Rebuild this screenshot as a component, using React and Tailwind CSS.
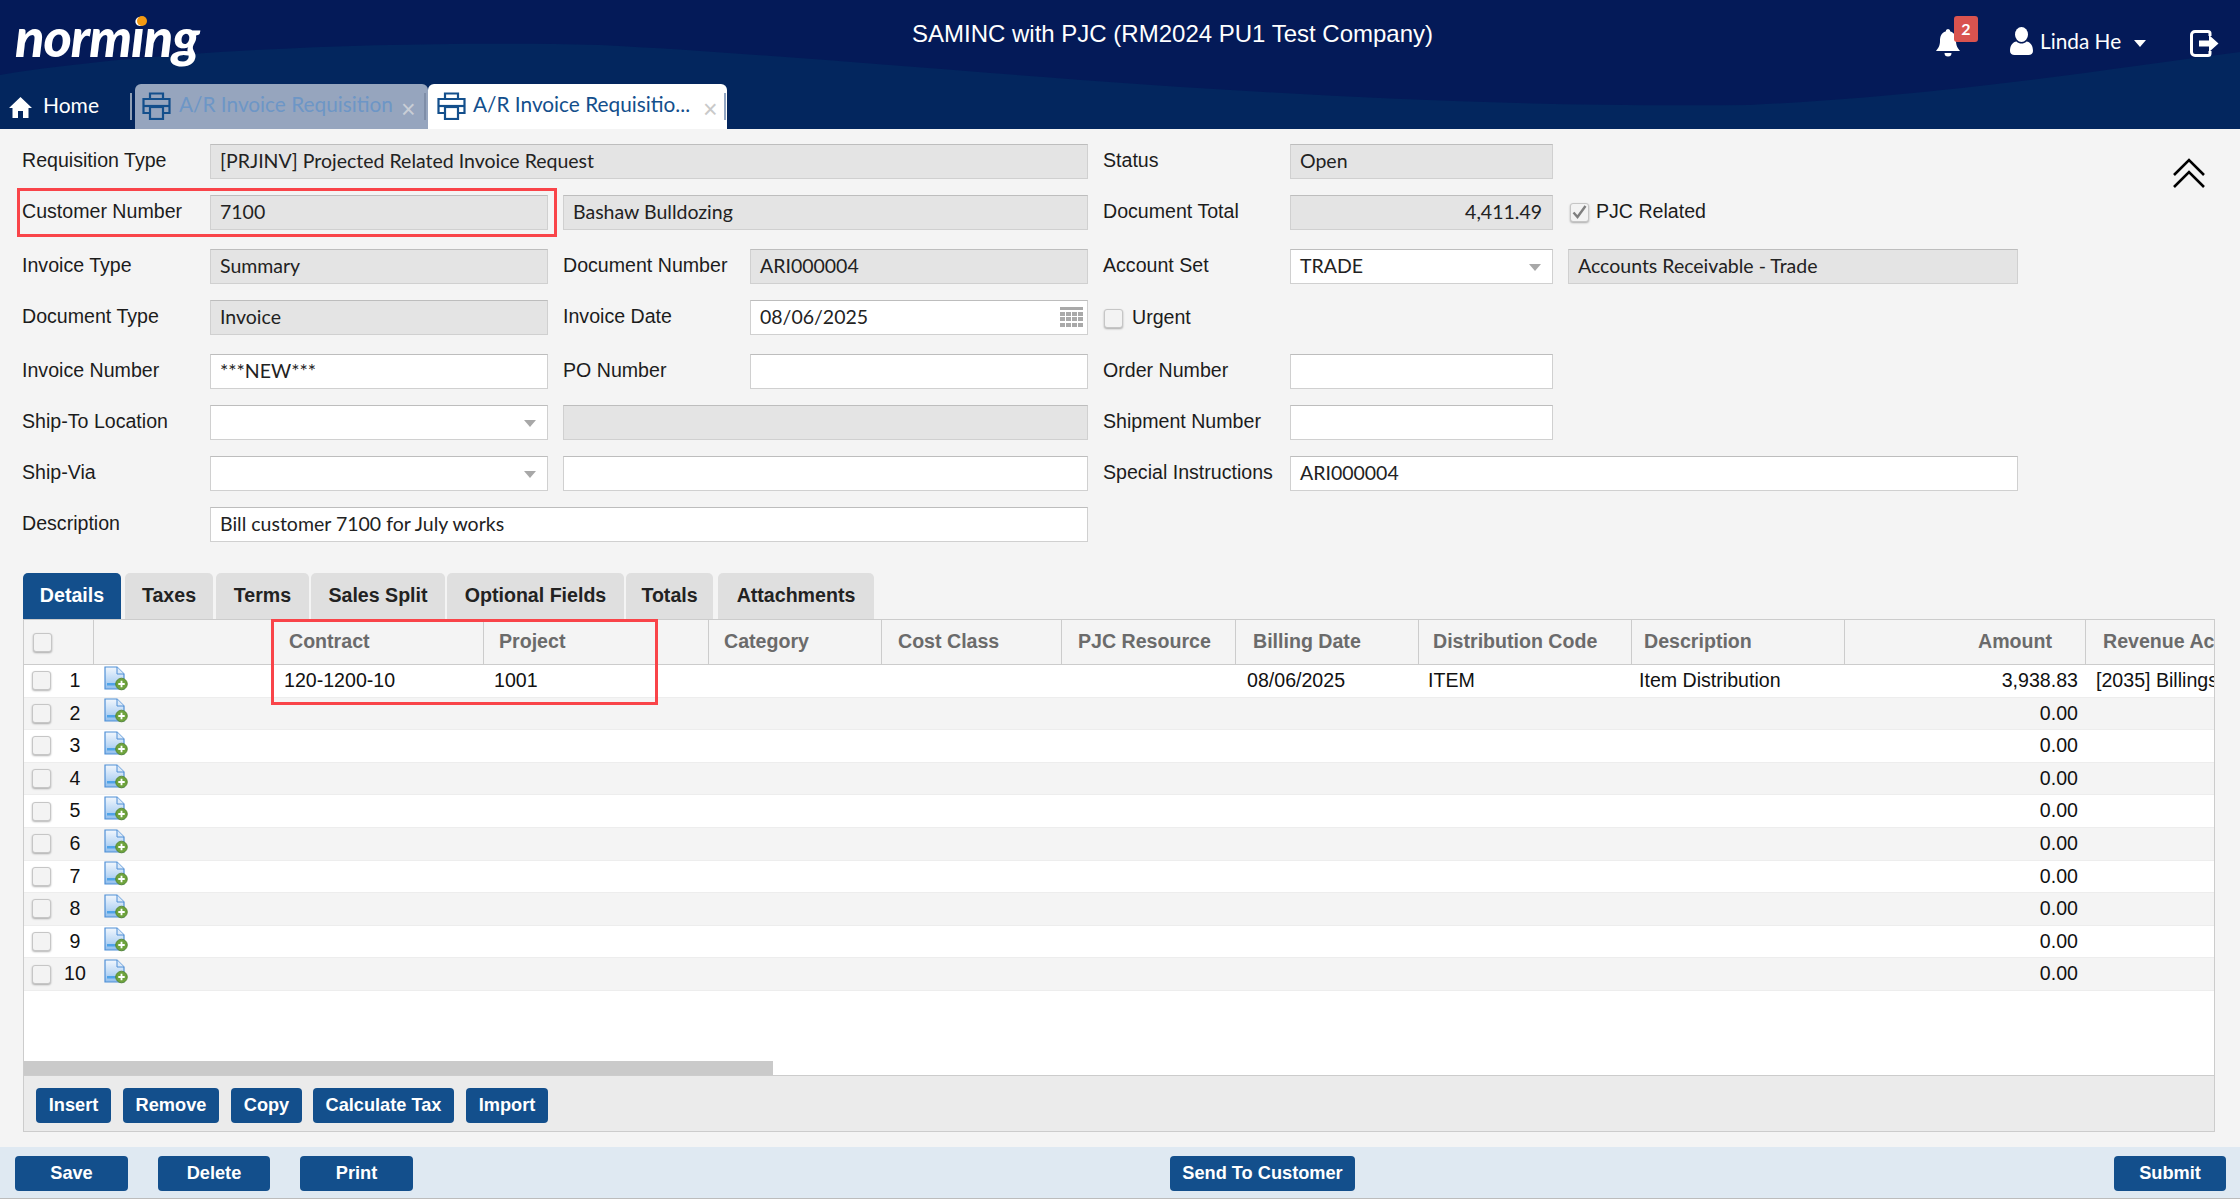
import React from "react";

const lato = "[font-family:Lato,sans-serif]";
const arial = "[font-family:Liberation_Sans,sans-serif]";

function Caret({ className = "" }) {
  return (
    <svg width="12" height="7" viewBox="0 0 12 7" className={className}>
      <path d="M0 0h12L6 7z" fill="currentColor" />
    </svg>
  );
}

function Label({ children, className = "" }) {
  return <div className={`flex items-center pb-[2px] text-[19.6px] text-[#1c1c1c] ${arial} ${className}`}>{children}</div>;
}

function Field({ value, ro, right, select, calendar, className = "" }) {
  return (
    <div
      className={`relative flex h-[35px] items-center border border-[#d0d0d0] border-t-[#bdbdbd] px-[9px] pb-[1px] text-[19.5px] text-[#222] ${lato} ${
        ro ? "bg-[#e4e4e4]" : "bg-white"
      } ${right ? "justify-end pr-[10px]" : ""} ${className}`}
    >
      {value}
      {select && <Caret className="absolute right-[11px] top-[14px] text-[#a8a8a8]" />}
      {calendar && (
        <svg width="23" height="21" viewBox="0 0 23 21" className="absolute right-[4px] top-[6px] text-[#a9a9a9]">
          <rect x="0" y="0" width="23" height="3" fill="currentColor" />
          {[5, 10, 16].map((y) =>
            [0, 6, 12, 18].map((x) => <rect key={`${x}-${y}`} x={x} y={y} width="5" height="4" fill="currentColor" />)
          )}
        </svg>
      )}
    </div>
  );
}

function Check({ checked, className = "" }) {
  return (
    <span
      className={`relative block h-[19px] w-[19px] rounded-[3px] border border-[#c6c6c6] bg-[#f3f3f3] shadow-[0_1px_2px_rgba(0,0,0,0.3)] ${className}`}
    >
      {checked && (
        <svg width="19" height="19" viewBox="0 0 19 19" className="absolute left-[-1px] top-[-1px]">
          <path d="M3.500 9.500l4 4.500 8-11" fill="none" stroke="#7f7f7f" strokeWidth="2.400" />
        </svg>
      )}
    </span>
  );
}

function Printer() {
  return (
    <svg width="29" height="28" viewBox="0 0 29 28" fill="none" stroke="#134f8c" strokeWidth="2.200">
      <path d="M8 7V1.500h13V7" />
      <path d="M7 21H1.500V7h26v14H22" />
      <path d="M2 14h25" />
      <rect x="8" y="15" width="13" height="12" />
    </svg>
  );
}

function DocIcon() {
  return (
    <svg width="24" height="25" viewBox="0 0 24 25">
      <defs>
        <linearGradient id="doc" x1="0" y1="0" x2="0" y2="1">
          <stop offset="0" stopColor="#f2f7fd" />
          <stop offset="0.6" stopColor="#bcd8f5" />
          <stop offset="1" stopColor="#8fbdec" />
        </linearGradient>
      </defs>
      <path d="M1 1h12l7 7v15H1z" fill="url(#doc)" stroke="#4f8fd6" strokeWidth="1.200" />
      <path d="M13 1v7h7" fill="#dbe9f8" stroke="#4f8fd6" strokeWidth="1" />
      <rect x="3" y="17" width="10" height="2.500" fill="#4fa3e8" />
      <circle cx="17.500" cy="18" r="5.800" fill="#6ea33c" stroke="#4d7d25" strokeWidth="0.800" />
      <path d="M17.500 14.800v6.400M14.300 18h6.400" stroke="#fff" strokeWidth="1.800" />
    </svg>
  );
}

function Btn({ children, className = "" }) {
  return (
    <button
      type="button"
      className={`flex h-[35px] items-center justify-center rounded-[4px] bg-[#134f8c] text-[18.2px] font-bold text-white ${arial} ${className}`}
    >
      {children}
    </button>
  );
}

const headers = [
  { label: "", pad: "pl-[16px]" },
  { label: "", pad: "pl-[16px]" },
  { label: "Contract", pad: "pl-[18px]" },
  { label: "Project", pad: "pl-[15px]" },
  { label: "Category", pad: "pl-[15px]" },
  { label: "Cost Class", pad: "pl-[16px]" },
  { label: "PJC Resource", pad: "pl-[16px]" },
  { label: "Billing Date", pad: "pl-[17px]" },
  { label: "Distribution Code", pad: "pl-[14px]" },
  { label: "Description", pad: "pl-[12px]" },
  { label: "Amount", pad: "justify-end pr-[33px]" },
  { label: "Revenue Account", pad: "pl-[17px]" },
];

const gridCols = "grid-cols-[70px_177px_213px_225px_173px_180px_174px_183px_213px_213px_241px_240px]";
const formCols = "grid-cols-[188px_338px_15px_187px_338px_15px_187px_263px_15px_450px]";

const rows = Array.from({ length: 10 }, (_, i) => i + 1);

export default function App() {
  return (
    <div className="relative h-[1199px] w-[2240px] overflow-hidden bg-[#f4f4f4]">
      {/* top bar */}
      <header className="relative h-[129px] overflow-hidden bg-[#041a58]">
        <svg width="2240" height="129" viewBox="0 0 2240 129" className="absolute left-0 top-0">
          <path
            d="M0 75C150 50 400 40 600 45C900 60 1300 110 1750 105C1950 95 2100 70 2240 52V129H0Z"
            fill="#03265e"
          />
        </svg>
        <div className={`absolute left-[15px] top-[2px] text-[54px] font-black italic leading-[70px] tracking-[-1px] text-white ${lato}`}>
          norming
        </div>
        <span className="absolute left-[137px] top-[16px] h-[10px] w-[10px] rounded-full bg-[#f39a12]" />
        <div className={`absolute left-[912px] top-[19px] text-[24px] leading-[30px] text-white ${arial}`}>
          SAMINC with PJC (RM2024 PU1 Test Company)
        </div>

        <svg width="24" height="28" viewBox="0 0 24 28" className="absolute left-[1936px] top-[29px]" fill="#fff">
          <path d="M12 0a2.500 2.500 0 0 1 2.300 2.500C19 3.700 20 8 20 12c0 5 2 7.500 4 10H0c2-2.500 4-5 4-10 0-4 1-8.300 5.700-9.500A2.500 2.500 0 0 1 12 0z" />
          <path d="M8.500 24h7a3.500 3.500 0 0 1-7 0z" />
        </svg>
        <div className={`absolute left-[1954px] top-[16px] flex h-[26px] w-[24px] items-center justify-center rounded-[3px] bg-[#d9534f] text-[16px] font-bold text-white ${lato}`}>
          2
        </div>
        <svg width="23" height="28" viewBox="0 0 23 28" className="absolute left-[2010px] top-[27px]" fill="#fff">
          <ellipse cx="11.500" cy="7.500" rx="6.500" ry="7.500" />
          <path d="M0 24c0-6 3-9 6.500-9.500C8 16 9.700 16.500 11.500 16.500S15 16 16.500 14.500C20 15 23 18 23 24c0 2.500-2 4-4.500 4h-14C2 28 0 26.500 0 24z" />
        </svg>
        <div className={`absolute left-[2040px] top-[27px] text-[20.8px] leading-[28px] text-white ${lato}`}>Linda He</div>
        <Caret className="absolute left-[2134px] top-[40px] text-white" />
        <svg width="30" height="27" viewBox="0 0 30 27" className="absolute left-[2190px] top-[30px]" fill="none">
          <path d="M18 1.500H5A3.500 3.500 0 0 0 1.500 5v17A3.500 3.500 0 0 0 5 25.500h13a2 2 0 0 0 2-2v-2.500M20 6V3.500a2 2 0 0 0-2-2" stroke="#fff" strokeWidth="3" />
          <path d="M9 10.500h10V5l9.500 8.500L19 22v-5.500H9z" fill="#fff" />
        </svg>

        {/* tab strip */}
        <div className="absolute left-[9px] top-[97px]">
          <svg width="23" height="21" viewBox="0 0 23 21" fill="#fff">
            <path d="M11.500 0L23 11h-3.500v10h-5.500v-7H9v7H3.500V11H0z" />
          </svg>
        </div>
        <div className={`absolute left-[43px] top-[91px] text-[21px] leading-[28px] text-white ${lato}`}>Home</div>
        <span className="absolute left-[130px] top-[93px] h-[27px] w-[2px] bg-[#8f9fb5]" />
        <div className="absolute left-[135px] top-[84px] flex h-[45px] w-[293px] items-start rounded-t-[6px] bg-[#96a5be]">
          <span className="ml-[7px] mt-[8px]"><Printer /></span>
          <span className={`ml-[8px] mt-[6px] text-[20.8px] leading-[28px] text-[#6d96c6] ${lato}`}>A/R Invoice Requisition</span>
          <span className={`absolute left-[266px] top-[11px] text-[25px] leading-[28px] text-[#c9ced6] ${arial}`}>×</span>
          <span className="absolute left-[289px] top-[9px] h-[27px] w-[2px] bg-[#7f8ea8]" />
        </div>
        <div className="absolute left-[428px] top-[84px] flex h-[45px] w-[299px] items-start rounded-t-[6px] bg-white">
          <span className="ml-[9px] mt-[8px]"><Printer /></span>
          <span className={`ml-[7px] mt-[6px] text-[20.8px] leading-[28px] text-[#134f8c] ${lato}`}>A/R Invoice Requisitio...</span>
          <span className={`absolute left-[275px] top-[11px] text-[25px] leading-[28px] text-[#c9c9c9] ${arial}`}>×</span>
          <span className="absolute left-[296px] top-[9px] h-[27px] w-[2px] bg-[#93a7c4]" />
        </div>
      </header>

      {/* form */}
      <div className="pl-[22px] pt-[15px]">
        <div className={`grid h-[36px] ${formCols}`}>
          <Label>Requisition Type</Label>
          <Field ro value="[PRJINV] Projected Related Invoice Request" className="col-span-4" />
          <div />
          <Label>Status</Label>
          <Field ro value="Open" />
        </div>
        <div className={`mt-[15px] grid h-[36px] ${formCols}`}>
          <Label>Customer Number</Label>
          <Field ro value="7100" />
          <div />
          <Field ro value="Bashaw Bulldozing" className="col-span-2" />
          <div />
          <Label>Document Total</Label>
          <Field ro right value="4,411.49" />
          <div />
          <div className="flex items-center gap-[7px] pb-[2px] text-[19.6px] text-[#1c1c1c]">
            <Check checked className="ml-[2px]" />
            <span className={arial}>PJC Related</span>
          </div>
        </div>
        <div className={`mt-[18px] grid h-[36px] ${formCols}`}>
          <Label>Invoice Type</Label>
          <Field ro value="Summary" />
          <div />
          <Label>Document Number</Label>
          <Field ro value="ARI000004" />
          <div />
          <Label>Account Set</Label>
          <Field select value="TRADE" />
          <div />
          <Field ro value="Accounts Receivable - Trade" />
        </div>
        <div className={`mt-[15px] grid h-[36px] ${formCols}`}>
          <Label>Document Type</Label>
          <Field ro value="Invoice" />
          <div />
          <Label>Invoice Date</Label>
          <Field calendar value="08/06/2025" />
          <div />
          <div className="col-span-2 flex items-center gap-[9px] text-[19.6px] text-[#1c1c1c]">
            <Check className="ml-[1px]" />
            <span className={arial}>Urgent</span>
          </div>
        </div>
        <div className={`mt-[18px] grid h-[36px] ${formCols}`}>
          <Label>Invoice Number</Label>
          <Field value="***NEW***" />
          <div />
          <Label>PO Number</Label>
          <Field />
          <div />
          <Label>Order Number</Label>
          <Field />
        </div>
        <div className={`mt-[15px] grid h-[36px] ${formCols}`}>
          <Label>Ship-To Location</Label>
          <Field select />
          <div />
          <Field ro className="col-span-2" />
          <div />
          <Label>Shipment Number</Label>
          <Field />
        </div>
        <div className={`mt-[15px] grid h-[36px] ${formCols}`}>
          <Label>Ship-Via</Label>
          <Field select />
          <div />
          <Field className="col-span-2" />
          <div />
          <Label>Special Instructions</Label>
          <Field value="ARI000004" className="col-span-3" />
        </div>
        <div className={`mt-[15px] grid h-[36px] ${formCols}`}>
          <Label>Description</Label>
          <Field value="Bill customer 7100 for July works" className="col-span-4" />
        </div>
      </div>

      <div className="absolute left-[17px] top-[188px] h-[49px] w-[540px] border-[3px] border-[#f94449]" />

      {/* detail tabs */}
      <div className={`absolute left-[23px] top-[573px] flex h-[46px] text-[19.6px] font-bold ${arial}`}>
        <div className="flex w-[98px] items-center justify-center rounded-t-[5px] bg-[#134f8c] text-white">Details</div>
        <div className="ml-[4px] flex w-[88px] items-center justify-center rounded-t-[5px] bg-[#dfdfdf] text-[#222]">Taxes</div>
        <div className="ml-[3px] flex w-[93px] items-center justify-center rounded-t-[5px] bg-[#dfdfdf] text-[#222]">Terms</div>
        <div className="ml-[2px] flex w-[134px] items-center justify-center rounded-t-[5px] bg-[#dfdfdf] text-[#222]">Sales Split</div>
        <div className="ml-[2px] flex w-[177px] items-center justify-center rounded-t-[5px] bg-[#dfdfdf] text-[#222]">Optional Fields</div>
        <div className="ml-[2px] flex w-[87px] items-center justify-center rounded-t-[5px] bg-[#dfdfdf] text-[#222]">Totals</div>
        <div className="ml-[5px] flex w-[156px] items-center justify-center rounded-t-[5px] bg-[#dfdfdf] text-[#222]">Attachments</div>
      </div>

      {/* detail grid */}
      <div className={`absolute left-[23px] top-[619px] h-[513px] w-[2192px] overflow-hidden border border-[#ccc] bg-white text-[19.6px] ${arial}`}>
        <div className={`grid h-[45px] w-[2400px] border-b border-[#ccc] bg-[#f4f4f4] font-bold text-[#6b6b6b] ${gridCols}`}>
          {headers.map((h, i) => (
            <div
              key={i}
              className={`flex items-center whitespace-nowrap ${i === 1 ? "" : "border-r"} border-[#ccc] ${h.pad}`}
            >
              {i === 0 ? <Check className="ml-[-7px]" /> : h.label}
            </div>
          ))}
        </div>
        {rows.map((n) => (
          <div
            key={n}
            className={`grid h-[32.6px] w-[2400px] items-center border-b border-[#ededed] text-[#111] ${gridCols} ${
              n % 2 === 0 ? "bg-[#f4f4f4]" : "bg-white"
            }`}
          >
            <div className="flex items-center">
              <Check className="ml-[8px]" />
              <span className="ml-[8px] w-[32px] text-center">{n}</span>
            </div>
            <div className="-mt-[5px] pl-[10px]"><DocIcon /></div>
            <div className="pl-[13px]">{n === 1 ? "120-1200-10" : ""}</div>
            <div className="pl-[10px]">{n === 1 ? "1001" : ""}</div>
            <div />
            <div />
            <div />
            <div className="pl-[11px]">{n === 1 ? "08/06/2025" : ""}</div>
            <div className="pl-[9px]">{n === 1 ? "ITEM" : ""}</div>
            <div className="pl-[7px]">{n === 1 ? "Item Distribution" : ""}</div>
            <div className="pr-[8px] text-right">{n === 1 ? "3,938.83" : "0.00"}</div>
            <div className="whitespace-nowrap pl-[10px]">{n === 1 ? "[2035] Billings in Excess" : ""}</div>
          </div>
        ))}
        <div className="absolute bottom-[56px] left-0 h-[14px] w-[749px] bg-[#cacaca]" />
        <div className="absolute bottom-0 left-0 flex h-[56px] w-full items-start border-t border-[#ccc] bg-[#ebebeb] pl-[12px] pt-[12px]">
          <Btn className="w-[75px]">Insert</Btn>
          <Btn className="ml-[12px] w-[96px]">Remove</Btn>
          <Btn className="ml-[12px] w-[71px]">Copy</Btn>
          <Btn className="ml-[11px] w-[141px]">Calculate Tax</Btn>
          <Btn className="ml-[12px] w-[82px]">Import</Btn>
        </div>
      </div>

      <div className="absolute left-[271px] top-[619px] h-[86px] w-[387px] border-[3px] border-[#f94449]" />

      {/* footer */}
      <footer className="absolute left-0 top-[1147px] h-[52px] w-full border-b border-[#bcbcbc] bg-[#dfe9f2]">
        <Btn className="absolute left-[15px] top-[9px] w-[113px]">Save</Btn>
        <Btn className="absolute left-[158px] top-[9px] w-[112px]">Delete</Btn>
        <Btn className="absolute left-[300px] top-[9px] w-[113px]">Print</Btn>
        <Btn className="absolute left-[1170px] top-[9px] w-[185px]">Send To Customer</Btn>
        <Btn className="absolute left-[2114px] top-[9px] w-[112px]">Submit</Btn>
      </footer>

      <svg width="32" height="30" viewBox="0 0 32 30" className="absolute left-[2173px] top-[158px]" fill="none" stroke="#000" strokeWidth="2.600">
        <path d="M1 17L16 2l15 15" />
        <path d="M1 29L16 14l15 15" />
      </svg>
    </div>
  );
}
